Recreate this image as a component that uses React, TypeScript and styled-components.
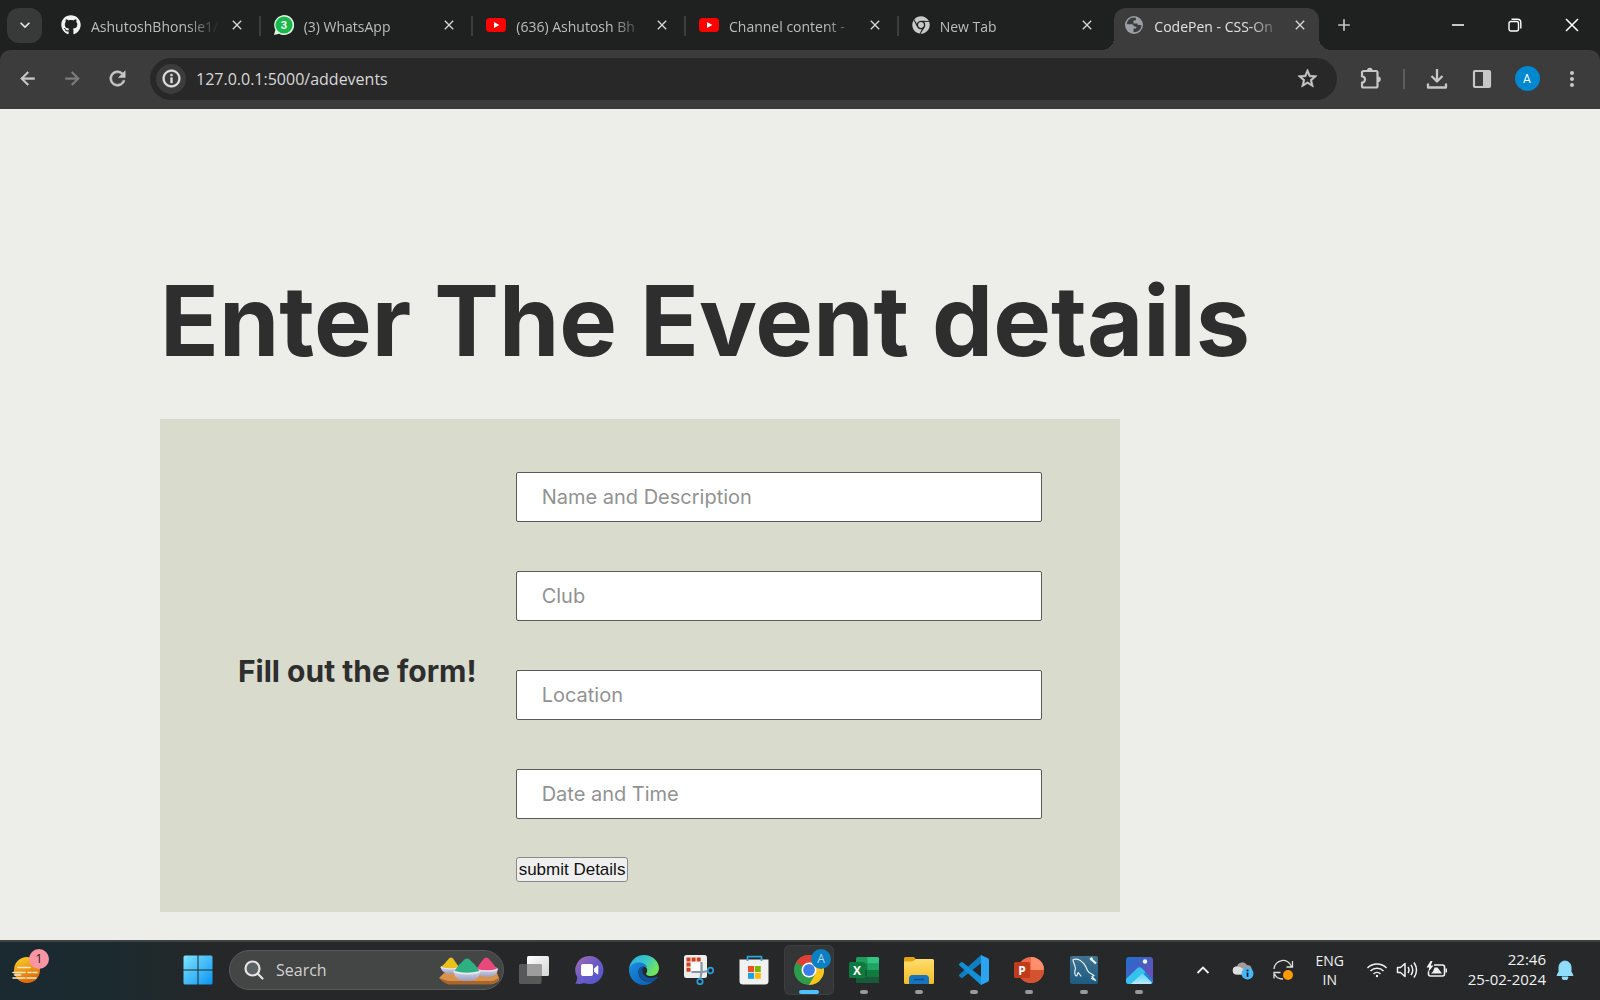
import React, { useState } from 'react';
import styled, { createGlobalStyle, css } from 'styled-components';
import { FaGithub, FaChrome } from 'react-icons/fa';
import {
  MdArrowBack, MdArrowForward, MdRefresh, MdInfoOutline, MdStarBorder,
  MdMoreVert, MdClose, MdAdd, MdKeyboardArrowDown,
} from 'react-icons/md';

const ui = `"Open Sans", "Noto Sans", sans-serif`;

const Global = createGlobalStyle`
  *, *::before, *::after { box-sizing: border-box; }
  body { margin: 0; background: #edeee9; font-family: ${ui}; }
  button, input { font: inherit; }
`;

const Screen = styled.div`
  display: flex;
  flex-direction: column;
  min-height: 100vh;
`;

const plainButton = css`
  display: flex;
  align-items: center;
  justify-content: center;
  flex: none;
  padding: 0;
  border: 0;
  background: none;
  color: inherit;
`;

const boldGlyph = css`
  svg path:not([fill='none']) { stroke: currentColor; stroke-width: 0.6; }
`;

/* ---------- browser ---------- */

const TabStrip = styled.header`
  display: flex;
  align-items: center;
  height: 50px;
  background: #1f2120;
  color: #c4c4c4;
`;

const TabSearch = styled.button`
  ${plainButton}
  width: 35px;
  height: 35px;
  margin: 0 6px 0 7px;
  border-radius: 12px;
  background: #383939;
  color: #e8e8e8;
`;

const Tabs = styled.nav`
  display: grid;
  grid-template-columns: repeat(6, 1fr);
  flex: 0 1 1276px;
  min-width: 0;
  height: 50px;
`;

const Tab = styled.div<{ $active?: boolean; $divider?: boolean }>`
  position: relative;
  display: flex;
  align-items: center;
  gap: 10px;
  min-width: 0;
  height: 42px;
  margin: 8px 5px 0 3px;
  padding: 0 11px 8px 10px;
  border-radius: 12px 12px 0 0;
  background: ${p => (p.$active ? '#3c3c3c' : 'transparent')};
  color: ${p => (p.$active ? '#e2e2e2' : '#bcbdbc')};

  ${p => p.$divider && css`
    &::after {
      content: '';
      position: absolute;
      right: -5px;
      top: 8px;
      width: 2px;
      height: 20px;
      background: #3c3d3d;
    }
  `}

  ${p => p.$active && css`
    &::before, &::after {
      content: '';
      position: absolute;
      bottom: 0;
      width: 12px;
      height: 12px;
    }
    &::before {
      left: -12px;
      background: radial-gradient(circle at 0 0, transparent 12px, #3c3c3c 12px);
    }
    &::after {
      right: -12px;
      background: radial-gradient(circle at 100% 0, transparent 12px, #3c3c3c 12px);
    }
  `}
`;

const TabTitle = styled.a`
  flex: 1;
  min-width: 0;
  overflow: hidden;
  white-space: nowrap;
  color: inherit;
  text-decoration: none;
  font-size: 14px;
  line-height: 20px;
  padding-top: 3px;
  mask-image: linear-gradient(to right, #000 75%, transparent 100%);
`;

const TabClose = styled.button`
  ${plainButton}
  width: 16px;
  height: 20px;
  color: #d6d6d6;
`;

const NewTab = styled.button`
  ${plainButton}
  width: 40px;
  height: 40px;
`;

const WindowButtons = styled.div`
  display: flex;
  margin-left: auto;
  color: #fff;
`;

const WindowButton = styled.button`
  ${plainButton}
  width: 57px;
  height: 50px;
`;

const ToolbarBack = styled.div`
  background: #1f2120;
`;

const Toolbar = styled.div`
  display: flex;
  align-items: center;
  height: 59px;
  padding: 0 8px 2px 7px;
  border-radius: 10px 10px 0 0;
  background: #3c3c3c;
  color: #c7c7c7;
`;

const NavButton = styled.button<{ $dim?: boolean }>`
  ${plainButton}
  ${boldGlyph}
  width: 40px;
  height: 40px;
  margin-right: 5px;
  color: ${p => (p.$dim ? '#7d7d7d' : '#c7c7c7')};
`;

const Omnibox = styled.div`
  ${boldGlyph}
  display: flex;
  align-items: center;
  flex: 1;
  min-width: 0;
  height: 42px;
  margin: 0 14px 0 8px;
  padding: 0 18px 0 6px;
  border-radius: 21px;
  background: #282828;
`;

const SiteInfo = styled.button`
  ${plainButton}
  width: 30px;
  height: 30px;
  border-radius: 50%;
  background: #3c3c3c;
  color: #e3e3e3;
`;

const Address = styled.input`
  flex: 1;
  min-width: 0;
  padding: 0 10px;
  border: 0;
  outline: 0;
  background: transparent;
  color: #d8d8d8;
  font-size: 16px;
  line-height: 24px;
`;

const ToolButton = styled.button`
  ${plainButton}
  width: 40px;
  height: 40px;
`;

const ToolGroup = styled.div`
  display: flex;
  align-items: center;
  gap: 5px;
`;

const Divider = styled.span`
  width: 2px;
  height: 20px;
  margin: 0 7px;
  background: #5c5c5c;
`;

const Avatar = styled.span`
  display: grid;
  place-items: center;
  width: 25px;
  height: 25px;
  border-radius: 50%;
  background: #0288d1;
  color: #fff;
  font: 12px/16px Roboto, sans-serif;
`;

/* ---------- page ---------- */

const Page = styled.main`
  flex: 1;
  padding: 153px 10% 28px;
  font-family: Inter, sans-serif;
  color: #2e2e2e;
`;

const Title = styled.h1`
  margin: 0 0 39px;
  font-size: 97px;
  font-weight: 700;
  line-height: 118px;
`;

const Card = styled.form`
  display: flex;
  align-items: center;
  width: 75%;
  padding: 53px 78px 30px;
  background: #d9dbcd;
`;

const CardTitle = styled.h2`
  flex: none;
  margin: 0;
  padding: 0 39px 12px 0;
  font-size: 30px;
  font-weight: 700;
  line-height: 36px;
`;

const Fields = styled.div`
  display: flex;
  flex: 1;
  flex-direction: column;
  align-items: flex-start;
  gap: 49px;
  min-width: 0;
`;

const Field = styled.input`
  width: 100%;
  height: 50px;
  padding: 0 25px;
  border: 1px solid #5a5a58;
  border-radius: 2px;
  background: #fff;
  color: #2e2e2e;
  font-size: 20px;

  &::placeholder { color: #929292; opacity: 1; }
`;

const Submit = styled.button`
  height: 25px;
  margin-top: -11px;
  padding: 0 2px;
  border: 1px solid #8a8a8a;
  border-radius: 3px;
  background: #efefef;
  color: #111;
  font: 17px/20px "Liberation Sans", Arial, sans-serif;
`;

/* ---------- taskbar ---------- */

const Taskbar = styled.footer`
  display: grid;
  grid-template-columns: 171px 1fr auto;
  align-items: center;
  height: 60px;
  padding: 0 26px 2px 2px;
  border-top: 2px solid #3d4141;
  background: linear-gradient(to right, #1a2a30 0, #1b2a2f 110px, #262728 220px, #26282a 100%);
  color: #f1f1f1;
`;

const TaskButton = styled.button<{ $active?: boolean }>`
  ${plainButton}
  position: relative;
  width: 50px;
  height: 50px;
  border-radius: 6px;
  ${p => p.$active && css`background: #343536; box-shadow: inset 0 0 0 1px #3d3e3f;`}
`;

const Marker = styled.span<{ $active?: boolean }>`
  position: absolute;
  bottom: 1px;
  left: 50%;
  width: ${p => (p.$active ? '20px' : '8px')};
  height: 4px;
  border-radius: 2px;
  background: ${p => (p.$active ? '#4cc2ff' : '#9a9a9a')};
  transform: translateX(-50%);
`;

const Badge = styled.span<{ $tone: string; $ink: string }>`
  position: absolute;
  top: 4px;
  right: 3px;
  display: grid;
  place-items: center;
  width: 20px;
  height: 20px;
  border-radius: 50%;
  background: ${p => p.$tone};
  color: ${p => p.$ink};
  font-size: 12px;
  line-height: 16px;
`;

const Apps = styled.div`
  display: flex;
  align-items: center;
  gap: 5px;
  min-width: 0;
`;

const SearchBox = styled.label`
  display: flex;
  align-items: center;
  flex: 0 1 275px;
  min-width: 0;
  height: 40px;
  margin-left: 1px;
  padding: 0 3px 0 14px;
  border: 1px solid #585959;
  border-radius: 20px;
  background: #444545;
`;

const SearchInput = styled.input`
  flex: 1;
  min-width: 0;
  padding: 0 0 0 12px;
  border: 0;
  outline: 0;
  background: transparent;
  font-size: 16px;
  line-height: 24px;
  &::placeholder { color: #d2d2d2; opacity: 1; }
`;

const Tray = styled.div`
  display: flex;
  align-items: center;
`;

const TrayButton = styled.button`
  ${plainButton}
  width: 40px;
  height: 44px;
`;

const Language = styled.button`
  ${plainButton}
  flex-direction: column;
  width: 54px;
  font-size: 14px;
  line-height: 19px;
`;

const Status = styled.button`
  ${plainButton}
  gap: 8px;
  margin: 0 20px 0 9px;
`;

const Clock = styled.time`
  margin: 0 10px 2px 0;
  font-size: 15px;
  line-height: 20px;
  text-align: right;
`;

/* ---------- drawings ---------- */

const WhatsApp = () => (
  <svg width="20" height="20" viewBox="0 0 20 20">
    <path d="M0 20l1.400-5.200A10 10 0 1 1 5.200 18.700z" fill="#dff5e3" />
    <circle cx="10" cy="10" r="8.600" fill="#18b94a" />
    <text x="10" y="14" textAnchor="middle" fontSize="11" fontWeight="700" fill="#fff" fontFamily="Roboto, sans-serif">3</text>
  </svg>
);

const YouTube = () => (
  <svg width="20" height="20" viewBox="0 0 20 20">
    <rect y="3" width="20" height="14" rx="3.500" fill="#f00" />
    <path d="M8 7l5.400 3L8 13z" fill="#fff" />
  </svg>
);

const Globe = () => (
  <svg width="20" height="20" viewBox="0 0 20 20">
    <circle cx="10" cy="10" r="9" fill="#9aa0a6" />
    <path d="M11.500 2.700C7 2 3.200 5 2.800 9.200h5q2 0 2.200 2.300h2.200v2H9.500v3.700c4.500.3 8-2.800 7.900-7.200h-2.600q-1.300 0-1.500-1.600H9.500V5.600h1.300q1.300 0 1.200-1.500z" fill="#3c3c3c" />
  </svg>
);

const Puzzle = () => (
  <svg width="24" height="24" viewBox="0 0 24 24" fill="none">
    <path d="M3 5.500A1.500 1.500 0 0 1 4.500 4H17a1.500 1.500 0 0 1 1.500 1.500V19A1.500 1.500 0 0 1 17 20.500H4.500A1.500 1.500 0 0 1 3 19v-3.500a2.900 2.900 0 0 0 0-6z" stroke="currentColor" strokeWidth="2.200" strokeLinejoin="round" />
    <path d="M8 3.500a2.800 2.800 0 0 1 5.600 0zM19 9.500a2.800 2.800 0 0 1 0 5.600z" fill="currentColor" />
  </svg>
);

const Download = () => (
  <svg width="24" height="24" viewBox="0 0 24 24" fill="none" stroke="currentColor" strokeWidth="2.300" strokeLinejoin="round">
    <path d="M12 2v12M6.500 9l5.500 5.500L17.500 9M3 16.500V20.500h18v-4" />
  </svg>
);

const SidePanel = () => (
  <svg width="20" height="20" viewBox="0 0 20 20">
    <rect x="2" y="2" width="16" height="16" rx="1" fill="none" stroke="currentColor" strokeWidth="2.200" />
    <path d="M11 2h7v16h-7z" fill="currentColor" />
  </svg>
);

const Minimise = () => (
  <svg width="14" height="14" viewBox="0 0 14 14"><path d="M1 7h12" stroke="currentColor" strokeWidth="1.500" /></svg>
);

const Restore = () => (
  <svg width="14" height="14" viewBox="0 0 14 14" fill="none" stroke="currentColor" strokeWidth="1.400">
    <rect x="1" y="3.500" width="9.500" height="9.500" rx="2" />
    <path d="M3.500 1.200H9.500a3.300 3.300 0 0 1 3.300 3.300V10.500" />
  </svg>
);

const CloseWindow = () => (
  <svg width="14" height="14" viewBox="0 0 14 14"><path d="M1 1l12 12M13 1L1 13" stroke="currentColor" strokeWidth="1.500" /></svg>
);

const Weather = () => (
  <svg width="30" height="30" viewBox="0 0 30 30">
    <defs>
      <linearGradient id="sun" x1="0" y1="0" x2="0.400" y2="1"><stop offset="0" stopColor="#fcd32c" /><stop offset="1" stopColor="#e06a06" /></linearGradient>
    </defs>
    <circle cx="15" cy="15" r="13" fill="url(#sun)" />
    <path d="M6 12.500h12M1 17.500h12M16 17.500h3M21 17.500h4M2.500 20h6M1 23h12M15 23h9" stroke="#fdeccc" strokeWidth="1.600" strokeLinecap="round" />
  </svg>
);

const Windows = () => (
  <svg width="30" height="30" viewBox="0 0 30 30">
    <defs>
      <linearGradient id="win" gradientUnits="userSpaceOnUse" x1="0" y1="0" x2="30" y2="30"><stop offset="0" stopColor="#7fe6ff" /><stop offset="1" stopColor="#0a93f2" /></linearGradient>
    </defs>
    <path d="M2 .5h12.500v14H.5V2A1.500 1.500 0 0 1 2 .5zM15.500.5H28A1.500 1.500 0 0 1 29.500 2v12.500h-14zM.5 15.500h14v14H2A1.500 1.500 0 0 1 .5 28zM15.500 15.500h14V28a1.500 1.500 0 0 1-1.500 1.500H15.500z" fill="url(#win)" />
  </svg>
);

const SearchGlyph = () => (
  <svg width="20" height="20" viewBox="0 0 20 20" fill="none" stroke="#e4e4e4" strokeWidth="2.200" strokeLinecap="round">
    <circle cx="8.500" cy="8.500" r="7" fill="#5a6264" /><path d="M13.800 13.800l4.700 4.700" />
  </svg>
);

const Bowls = () => (
  <svg width="62" height="32" viewBox="0 0 62 32">
    <defs>
      <linearGradient id="bowl" x1="0" y1="0" x2="0" y2="1"><stop offset="0" stopColor="#d8d9ea" /><stop offset="1" stopColor="#9a9cc2" /></linearGradient>
    </defs>
    <path d="M6 19h53l2 5q1 2-2 4l-4 2H10L1 24z" fill="#d9924a" />
    <path d="M1 24l9 3h45l6-3q0 3-4 5l-4 1.500H11Q5 29 1 24z" fill="#a9652c" />
    <path d="M2.500 13h19q-.5 7-9 7t-10-7z" fill="url(#bowl)" /><ellipse cx="12" cy="13.200" rx="9.500" ry="2.300" fill="#e4e4f0" />
    <path d="M3.500 13Q8 8 11 4.500q2-2 4 0Q18 9 21 13q-8 2.500-17.500 0z" fill="#e9c31c" />
    <path d="M38 15h22q-1 8-11 8t-11-8z" fill="url(#bowl)" /><ellipse cx="49" cy="15" rx="11" ry="2.800" fill="#e4e4f0" />
    <path d="M38.500 15Q42 9 46 4.500q2-2 4.500 0Q55 9 59 15q-10 2.500-20.500 0z" fill="#e8487c" />
    <path d="M15.500 17h27q-1 10-13.500 10t-13.500-10z" fill="url(#bowl)" /><ellipse cx="29" cy="17.200" rx="13.500" ry="3.200" fill="#e8e8f3" />
    <path d="M16.500 17Q21 10 26.500 5.500q2.500-2 5 0Q37 10 41.500 17q-12.500 3.500-25 0z" fill="#2fb083" />
  </svg>
);

const TaskView = () => (
  <svg width="30" height="30" viewBox="0 0 30 30">
    <defs>
      <linearGradient id="tv" x1="0" y1="0" x2="1" y2="1"><stop offset="0" stopColor="#fff" /><stop offset="1" stopColor="#d5d5d5" /></linearGradient>
    </defs>
    <rect x="8" y="1" width="22" height="20" rx="1.500" fill="url(#tv)" />
    <rect x="0" y="9" width="22.500" height="20" rx="1.500" fill="#5c5c5c" opacity=".92" />
    <path d="M8 9h14.500v12H8z" fill="#9d9d9d" />
  </svg>
);

const Chat = () => (
  <svg width="30" height="30" viewBox="0 0 30 30">
    <defs>
      <linearGradient id="chat" x1="0" y1="0" x2="1" y2="1"><stop offset="0" stopColor="#a66bb0" /><stop offset=".5" stopColor="#6a5cc8" /><stop offset="1" stopColor="#4d55cc" /></linearGradient>
    </defs>
    <path d="M15.500 1a14 14 0 1 1-5.500 26.900Q6 29.500 1.300 28.500 3.500 25.500 3.200 22A14 14 0 0 1 15.500 1z" fill="url(#chat)" />
    <rect x="7" y="9" width="12" height="12" rx="2" fill="#fff" />
    <path d="M20 13.500l3.500-3q.8-.4.8.5v8q0 .9-.8.5l-3.500-3z" fill="#fff" />
  </svg>
);

const Edge = () => (
  <svg width="30" height="30" viewBox="0 0 30 30">
    <defs>
      <linearGradient id="edgeTop" x1="0" y1="0" x2="1" y2=".5"><stop offset="0" stopColor="#2fa9e4" /><stop offset=".55" stopColor="#37c6cb" /><stop offset="1" stopColor="#72e65a" /></linearGradient>
      <linearGradient id="edgeLow" x1="0" y1="0" x2="1" y2="1"><stop offset="0" stopColor="#1b8de0" /><stop offset="1" stopColor="#0b5cb0" /></linearGradient>
    </defs>
    <path d="M0 14C1 6 7 0 15 0c9 0 15 7 15 13 0 5-3.500 8-8 8-3.500 0-5.500-1.500-4.700-2.700 2-2.500 1.200-7.300-4.300-7.300C6 9 2 10 0 14z" fill="url(#edgeTop)" />
    <path d="M0 14c1.500-4 5-6.500 9.500-6.500 4.500 0 7.500 2 8.500 4.500-6-2-9 2-8.500 6C10 25 17 28 24.500 26 22 28.800 18.500 30 15 30 6 30-.5 22.500 0 14z" fill="url(#edgeLow)" />
    <path d="M9.500 18c-.5-3.500 2-7 6-6.500-3 2-3 6 0 9 3.500 3.300 9 3 12.500 1 .5-.2.900.2.600.7C24 30 11 27 9.500 18z" fill="#10529c" />
  </svg>
);

const Snip = () => (
  <svg width="30" height="30" viewBox="0 0 30 30">
    <rect x="0" y="0" width="23" height="23" rx="2.500" fill="#eeeeee" />
    <path d="M2.500 2.500h4v4h-4zM7.600 2.500h4v4h-4zM12.700 2.500h4v4h-4zM2.500 7.600h4v4h-4zM2.500 12.700h4v4h-4z" fill="#d0401c" />
    <path d="M7.500 7.500h9v9h-9z" fill="#fff" />
    <path d="M17.500 7v9.500l-1 7M7.500 17h11l5.500-1" fill="none" stroke="#8b98a3" strokeWidth="2.200" />
    <circle cx="26.500" cy="15.500" r="2.800" fill="none" stroke="#279fd9" strokeWidth="1.700" />
    <circle cx="16" cy="26.500" r="2.700" fill="none" stroke="#279fd9" strokeWidth="1.700" />
  </svg>
);

const Store = () => (
  <svg width="30" height="30" viewBox="0 0 30 30">
    <path d="M.5 4.500h29V26a3.500 3.500 0 0 1-3.500 3.500H4A3.500 3.500 0 0 1 .5 26z" fill="#f1f1f1" />
    <path d="M8.500 6V1.700h14V6" fill="none" stroke="#2ba5dd" strokeWidth="1.700" />
    <path d="M9 11h6v6H9z" fill="#f04f23" /><path d="M15.800 11h6v6h-6z" fill="#7db800" />
    <path d="M9 17.800h6v6H9z" fill="#1ba1e8" /><path d="M15.800 17.800h6v6h-6z" fill="#fdb80a" />
  </svg>
);

const Chrome = () => (
  <svg width="30" height="30" viewBox="0 0 30 30">
    <circle cx="15" cy="15" r="15" fill="#2f9c4b" />
    <path d="M15 15L2 7.500A15 15 0 0 1 28 7.500z" fill="#e63c31" />
    <path d="M15 7.500h13A15 15 0 0 1 15 30l6.500-11.200z" fill="#fbc41a" />
    <path d="M2 7.500L8.500 18.800 15 15z" fill="#2f9c4b" />
    <circle cx="15" cy="15" r="7.500" fill="#fff" />
    <circle cx="15" cy="15" r="5.900" fill="#3d7de8" />
  </svg>
);

const Excel = () => (
  <svg width="30" height="30" viewBox="0 0 30 30">
    <rect x="7" y="2" width="23" height="26" rx="1.500" fill="#1f9d5b" />
    <path d="M18.500 2H28.500A1.500 1.500 0 0 1 30 3.500v5H18.500z" fill="#34c481" /><path d="M7 8.500h11.500V15H7z" fill="#117d43" /><path d="M18.500 8.500H30V15H18.500z" fill="#21a366" />
    <path d="M7 15h11.500v6.500H7z" fill="#0f5f35" /><path d="M18.500 15H30v6.500H18.500z" fill="#107c41" /><path d="M7 21.500h23v5a1.500 1.500 0 0 1-1.500 1.500h-20A1.500 1.500 0 0 1 7 26.500z" fill="#185c37" />
    <rect x="0" y="7" width="16" height="16" rx="1.500" fill="#0f7a40" />
    <text x="8" y="19.500" textAnchor="middle" fontSize="12" fontWeight="700" fill="#fff" fontFamily="Open Sans, sans-serif">X</text>
  </svg>
);

const Folder = () => (
  <svg width="30" height="30" viewBox="0 0 30 30">
    <defs>
      <linearGradient id="fold" x1="0" y1="0" x2="0" y2="1"><stop offset="0" stopColor="#ffdd6c" /><stop offset="1" stopColor="#f5bb25" /></linearGradient>
    </defs>
    <path d="M0 8V3.500A1.500 1.500 0 0 1 1.500 2H10l3 3.500L9 8z" fill="#e2a21a" />
    <path d="M0 6.500h8.500L12 4h16.500A1.500 1.500 0 0 1 30 5.500v22A1.500 1.500 0 0 1 28.500 29h-27A1.500 1.500 0 0 1 0 27.500z" fill="url(#fold)" />
    <path d="M5 29v-5.500A3.500 3.500 0 0 1 8.500 20h13a3.500 3.500 0 0 1 3.500 3.500V29z" fill="#1775be" />
    <path d="M10 24.500h10" stroke="#0c4e8e" strokeWidth="1.500" />
  </svg>
);

const VSCode = () => (
  <svg width="30" height="30" viewBox="0 0 30 30">
    <path d="M22 0v8.300L3.600 22.700q-.8.500-1.500 0L.4 21.200q-.8-.8 0-1.600z" fill="#0f7fc4" />
    <path d="M22 30v-8.300L3.600 7.300q-.8-.5-1.500 0L.4 8.800q-.8.8 0 1.600z" fill="#138fd8" />
    <path d="M22 0l7 3.300q1 .5 1 1.600v20.200q0 1.100-1 1.600L22 30z" fill="#2ba3ee" />
  </svg>
);

const PowerPoint = () => (
  <svg width="30" height="30" viewBox="0 0 30 30">
    <circle cx="17" cy="15" r="13" fill="#ed6c47" />
    <path d="M17 2a13 13 0 0 1 13 13H17z" fill="#ff8f6b" /><path d="M4 15h26a13 13 0 0 1-26 0z" fill="#d35230" />
    <rect x="0" y="7" width="16" height="16" rx="1.500" fill="#c13b1b" />
    <text x="8" y="19.500" textAnchor="middle" fontSize="12" fontWeight="700" fill="#fff" fontFamily="Open Sans, sans-serif">P</text>
  </svg>
);

const Workbench = () => (
  <svg width="30" height="30" viewBox="0 0 30 30">
    <defs>
      <linearGradient id="wb" x1="0" y1="0" x2="0" y2="1"><stop offset="0" stopColor="#3f7391" /><stop offset="1" stopColor="#1e5b80" /></linearGradient>
    </defs>
    <rect x="1" y="1" width="28" height="28" rx="2" fill="url(#wb)" />
    <path d="M4 4.500C9 3 14 6 17 12c1 3 2 5 4 6l4 2.500-2 1 3.500 4-4.500-2.200M4 4.500c0 3 2 5 2.500 9-1.500 4-.5 7.500.8 7.500 1.200 0 1-3 2-3.500l3 4" fill="none" stroke="#e6eef3" strokeWidth="1.200" strokeLinejoin="round" />
    <path d="M22.500 4.500l4.500 4M21 4.500l2.500-1.500" stroke="#f2f5f7" strokeWidth="2.200" />
  </svg>
);

const Photos = () => (
  <svg width="30" height="30" viewBox="0 0 30 30">
    <defs>
      <linearGradient id="ph" x1="0" y1="0" x2="1" y2="1"><stop offset="0" stopColor="#1e6fd0" /><stop offset="1" stopColor="#7a48b0" /></linearGradient>
      <linearGradient id="hill" x1="0" y1="0" x2="0" y2="1"><stop offset="0" stopColor="#54d8f5" /><stop offset="1" stopColor="#bfe9f8" /></linearGradient>
    </defs>
    <rect x="2" y="2" width="27" height="27" rx="3" fill="url(#ph)" />
    <circle cx="21" cy="6.500" r="2.200" fill="#f4f6fb" />
    <path d="M2 24L13 13.500q2.500-2.500 5 0L29 25v1a3 3 0 0 1-3 3H5a3 3 0 0 1-3-3z" fill="#1c86de" />
    <path d="M2 24L13 13.500q2.500-2.500 5 0l3.500 3.700L9 29H5a3 3 0 0 1-3-3z" fill="#36c2ee" />
    <path d="M7 29l10-9.500q1.500-1.300 3 0l8 8.300q-.8 1.200-2 1.200z" fill="url(#hill)" />
  </svg>
);

const Chevron = () => (
  <svg width="14" height="10" viewBox="0 0 14 10"><path d="M1.500 8L7 2.500 12.500 8" fill="none" stroke="currentColor" strokeWidth="1.800" /></svg>
);

const Cloud = () => (
  <svg width="22" height="20" viewBox="0 0 22 20">
    <path d="M4.500 14.500a4 4 0 0 1 .5-8A5.500 5.500 0 0 1 15 5a4.800 4.800 0 0 1 1 9.500z" fill="#a29c9c" />
    <path d="M4.500 14.500a4 4 0 0 1 .5-8q4 0 8 4v4z" fill="#dedede" />
    <circle cx="15.500" cy="13.500" r="6" fill="#45b8f5" />
    <path d="M15.500 12.500v4.500" stroke="#12222e" strokeWidth="1.800" /><circle cx="15.500" cy="10.500" r="1.100" fill="#12222e" />
  </svg>
);

const Sync = () => (
  <svg width="22" height="22" viewBox="0 0 22 22">
    <path d="M2 10A9 9 0 0 1 19.500 7.500M20.500 2v6h-6M8.500 13.500H2v6M2.500 15A9 9 0 0 0 11 20" fill="none" stroke="#dedede" strokeWidth="1.300" />
    <circle cx="16" cy="16" r="5" fill="#fd9a05" />
  </svg>
);

const Wifi = () => (
  <svg width="22" height="18" viewBox="0 0 22 18" fill="none" stroke="currentColor" strokeWidth="1.500">
    <path d="M1.500 7a13.500 13.500 0 0 1 19 0M4.500 10a9.200 9.200 0 0 1 13 0M7.500 13a5 5 0 0 1 7 0" /><circle cx="11" cy="15" r="1.200" fill="currentColor" stroke="none" />
  </svg>
);

const Volume = () => (
  <svg width="22" height="18" viewBox="0 0 22 18" fill="none" stroke="currentColor" strokeWidth="1.500">
    <path d="M1.500 6.500h3L9 2.500v13L4.500 11.500h-3zM12 6q2 3 0 6M15 3.800q3.500 5.200 0 10.400M18 1.500q5 7.500 0 15" strokeLinejoin="round" />
  </svg>
);

const Battery = () => (
  <svg width="22" height="18" viewBox="0 0 22 18">
    <path d="M8 4h8.500a2 2 0 0 1 2 2v7a2 2 0 0 1-2 2h-12a2 2 0 0 1-2-2v-2.500" fill="none" stroke="currentColor" strokeWidth="1.600" />
    <path d="M19.500 7.500h1.500v4h-1.500z" fill="currentColor" /><path d="M8.500 6.500h3l4.500 6H5l2-2z" fill="currentColor" />
    <path d="M4.500 0L.5 6.500h2.800L2 11.500l5.500-7H4.800L6.500 0z" fill="currentColor" />
  </svg>
);

const Bell = () => (
  <svg width="18" height="20" viewBox="0 0 18 20">
    <path d="M9 1a6 6 0 0 1 6 6v4.500l2 4H1l2-4V7a6 6 0 0 1 6-6zM6 17h6a3 3 0 0 1-6 0z" fill="#8fdcfb" stroke="#8fdcfb" strokeWidth="1" strokeLinejoin="round" />
  </svg>
);

/* ---------- data ---------- */

const tabs = [
  { title: 'AshutoshBhonsle1/', icon: <FaGithub size={20} color="#f2f2f2" />, divider: true },
  { title: '(3) WhatsApp', icon: <WhatsApp />, divider: true },
  { title: '(636) Ashutosh Bh', icon: <YouTube />, divider: true },
  { title: 'Channel content -', icon: <YouTube />, divider: true },
  { title: 'New Tab', icon: <FaChrome size={18} color="#c9c9c9" /> },
  { title: 'CodePen - CSS-On', icon: <Globe />, active: true },
];

const fields = ['Name and Description', 'Club', 'Location', 'Date and Time'];

const pinned = [
  { name: 'Task view', icon: <TaskView /> },
  { name: 'Chat', icon: <Chat /> },
  { name: 'Edge', icon: <Edge /> },
  { name: 'Snipping Tool', icon: <Snip /> },
  { name: 'Store', icon: <Store /> },
  { name: 'Chrome', icon: <Chrome />, open: true, active: true },
  { name: 'Excel', icon: <Excel />, open: true },
  { name: 'File Explorer', icon: <Folder />, open: true },
  { name: 'Visual Studio Code', icon: <VSCode />, open: true },
  { name: 'PowerPoint', icon: <PowerPoint />, open: true },
  { name: 'MySQL Workbench', icon: <Workbench />, open: true },
  { name: 'Photos', icon: <Photos />, open: true },
];

export default function App() {
  const [address, setAddress] = useState('127.0.0.1:5000/addevents');

  return (
    <Screen>
      <Global />
      <TabStrip>
        <TabSearch aria-label="Search tabs"><MdKeyboardArrowDown size={20} /></TabSearch>
        <Tabs aria-label="Tabs">
          {tabs.map(t => (
            <Tab key={t.title} $active={t.active} $divider={t.divider}>
              {t.icon}
              <TabTitle href="#">{t.title}</TabTitle>
              <TabClose aria-label="Close tab"><MdClose size={16} /></TabClose>
            </Tab>
          ))}
        </Tabs>
        <NewTab aria-label="New tab"><MdAdd size={20} /></NewTab>
        <WindowButtons>
          <WindowButton aria-label="Minimise"><Minimise /></WindowButton>
          <WindowButton aria-label="Restore"><Restore /></WindowButton>
          <WindowButton aria-label="Close"><CloseWindow /></WindowButton>
        </WindowButtons>
      </TabStrip>

      <ToolbarBack>
        <Toolbar>
          <NavButton aria-label="Back"><MdArrowBack size={21} /></NavButton>
          <NavButton aria-label="Forward" $dim><MdArrowForward size={21} /></NavButton>
          <NavButton aria-label="Reload"><MdRefresh size={23} /></NavButton>
          <Omnibox>
            <SiteInfo aria-label="Site information"><MdInfoOutline size={21} /></SiteInfo>
            <Address aria-label="Address" value={address} onChange={e => setAddress(e.target.value)} />
            <MdStarBorder size={23} />
          </Omnibox>
          <ToolGroup>
            <ToolButton aria-label="Extensions"><Puzzle /></ToolButton>
            <Divider />
            <ToolButton aria-label="Downloads"><Download /></ToolButton>
            <ToolButton aria-label="Side panel"><SidePanel /></ToolButton>
            <ToolButton aria-label="Profile"><Avatar>A</Avatar></ToolButton>
            <ToolButton aria-label="Menu"><MdMoreVert size={24} /></ToolButton>
          </ToolGroup>
        </Toolbar>
      </ToolbarBack>

      <Page>
        <Title>Enter The Event details</Title>
        <Card onSubmit={e => e.preventDefault()}>
          <CardTitle>Fill out the form!</CardTitle>
          <Fields>
            {fields.map(f => <Field key={f} aria-label={f} placeholder={f} />)}
            <Submit type="submit">submit Details</Submit>
          </Fields>
        </Card>
      </Page>

      <Taskbar>
        <TaskButton aria-label="Weather"><Weather /><Badge $tone="#f995a2" $ink="#1c1c1c">1</Badge></TaskButton>
        <Apps>
          <TaskButton aria-label="Start"><Windows /></TaskButton>
          <SearchBox>
            <SearchGlyph />
            <SearchInput aria-label="Search" placeholder="Search" />
            <Bowls />
          </SearchBox>
          {pinned.map(a => (
            <TaskButton key={a.name} aria-label={a.name} $active={a.active}>
              {a.icon}
              {a.active && <Badge $tone="#0b7fc2" $ink="#b7dcf1">A</Badge>}
              {a.open && <Marker $active={a.active} />}
            </TaskButton>
          ))}
        </Apps>
        <Tray>
          <TrayButton aria-label="Hidden icons"><Chevron /></TrayButton>
          <TrayButton aria-label="OneDrive"><Cloud /></TrayButton>
          <TrayButton aria-label="Updates"><Sync /></TrayButton>
          <Language><span>ENG</span><span>IN</span></Language>
          <Status aria-label="Network, volume, battery"><Wifi /><Volume /><Battery /></Status>
          <Clock>22:46<br />25-02-2024</Clock>
          <Bell />
        </Tray>
      </Taskbar>
    </Screen>
  );
}
